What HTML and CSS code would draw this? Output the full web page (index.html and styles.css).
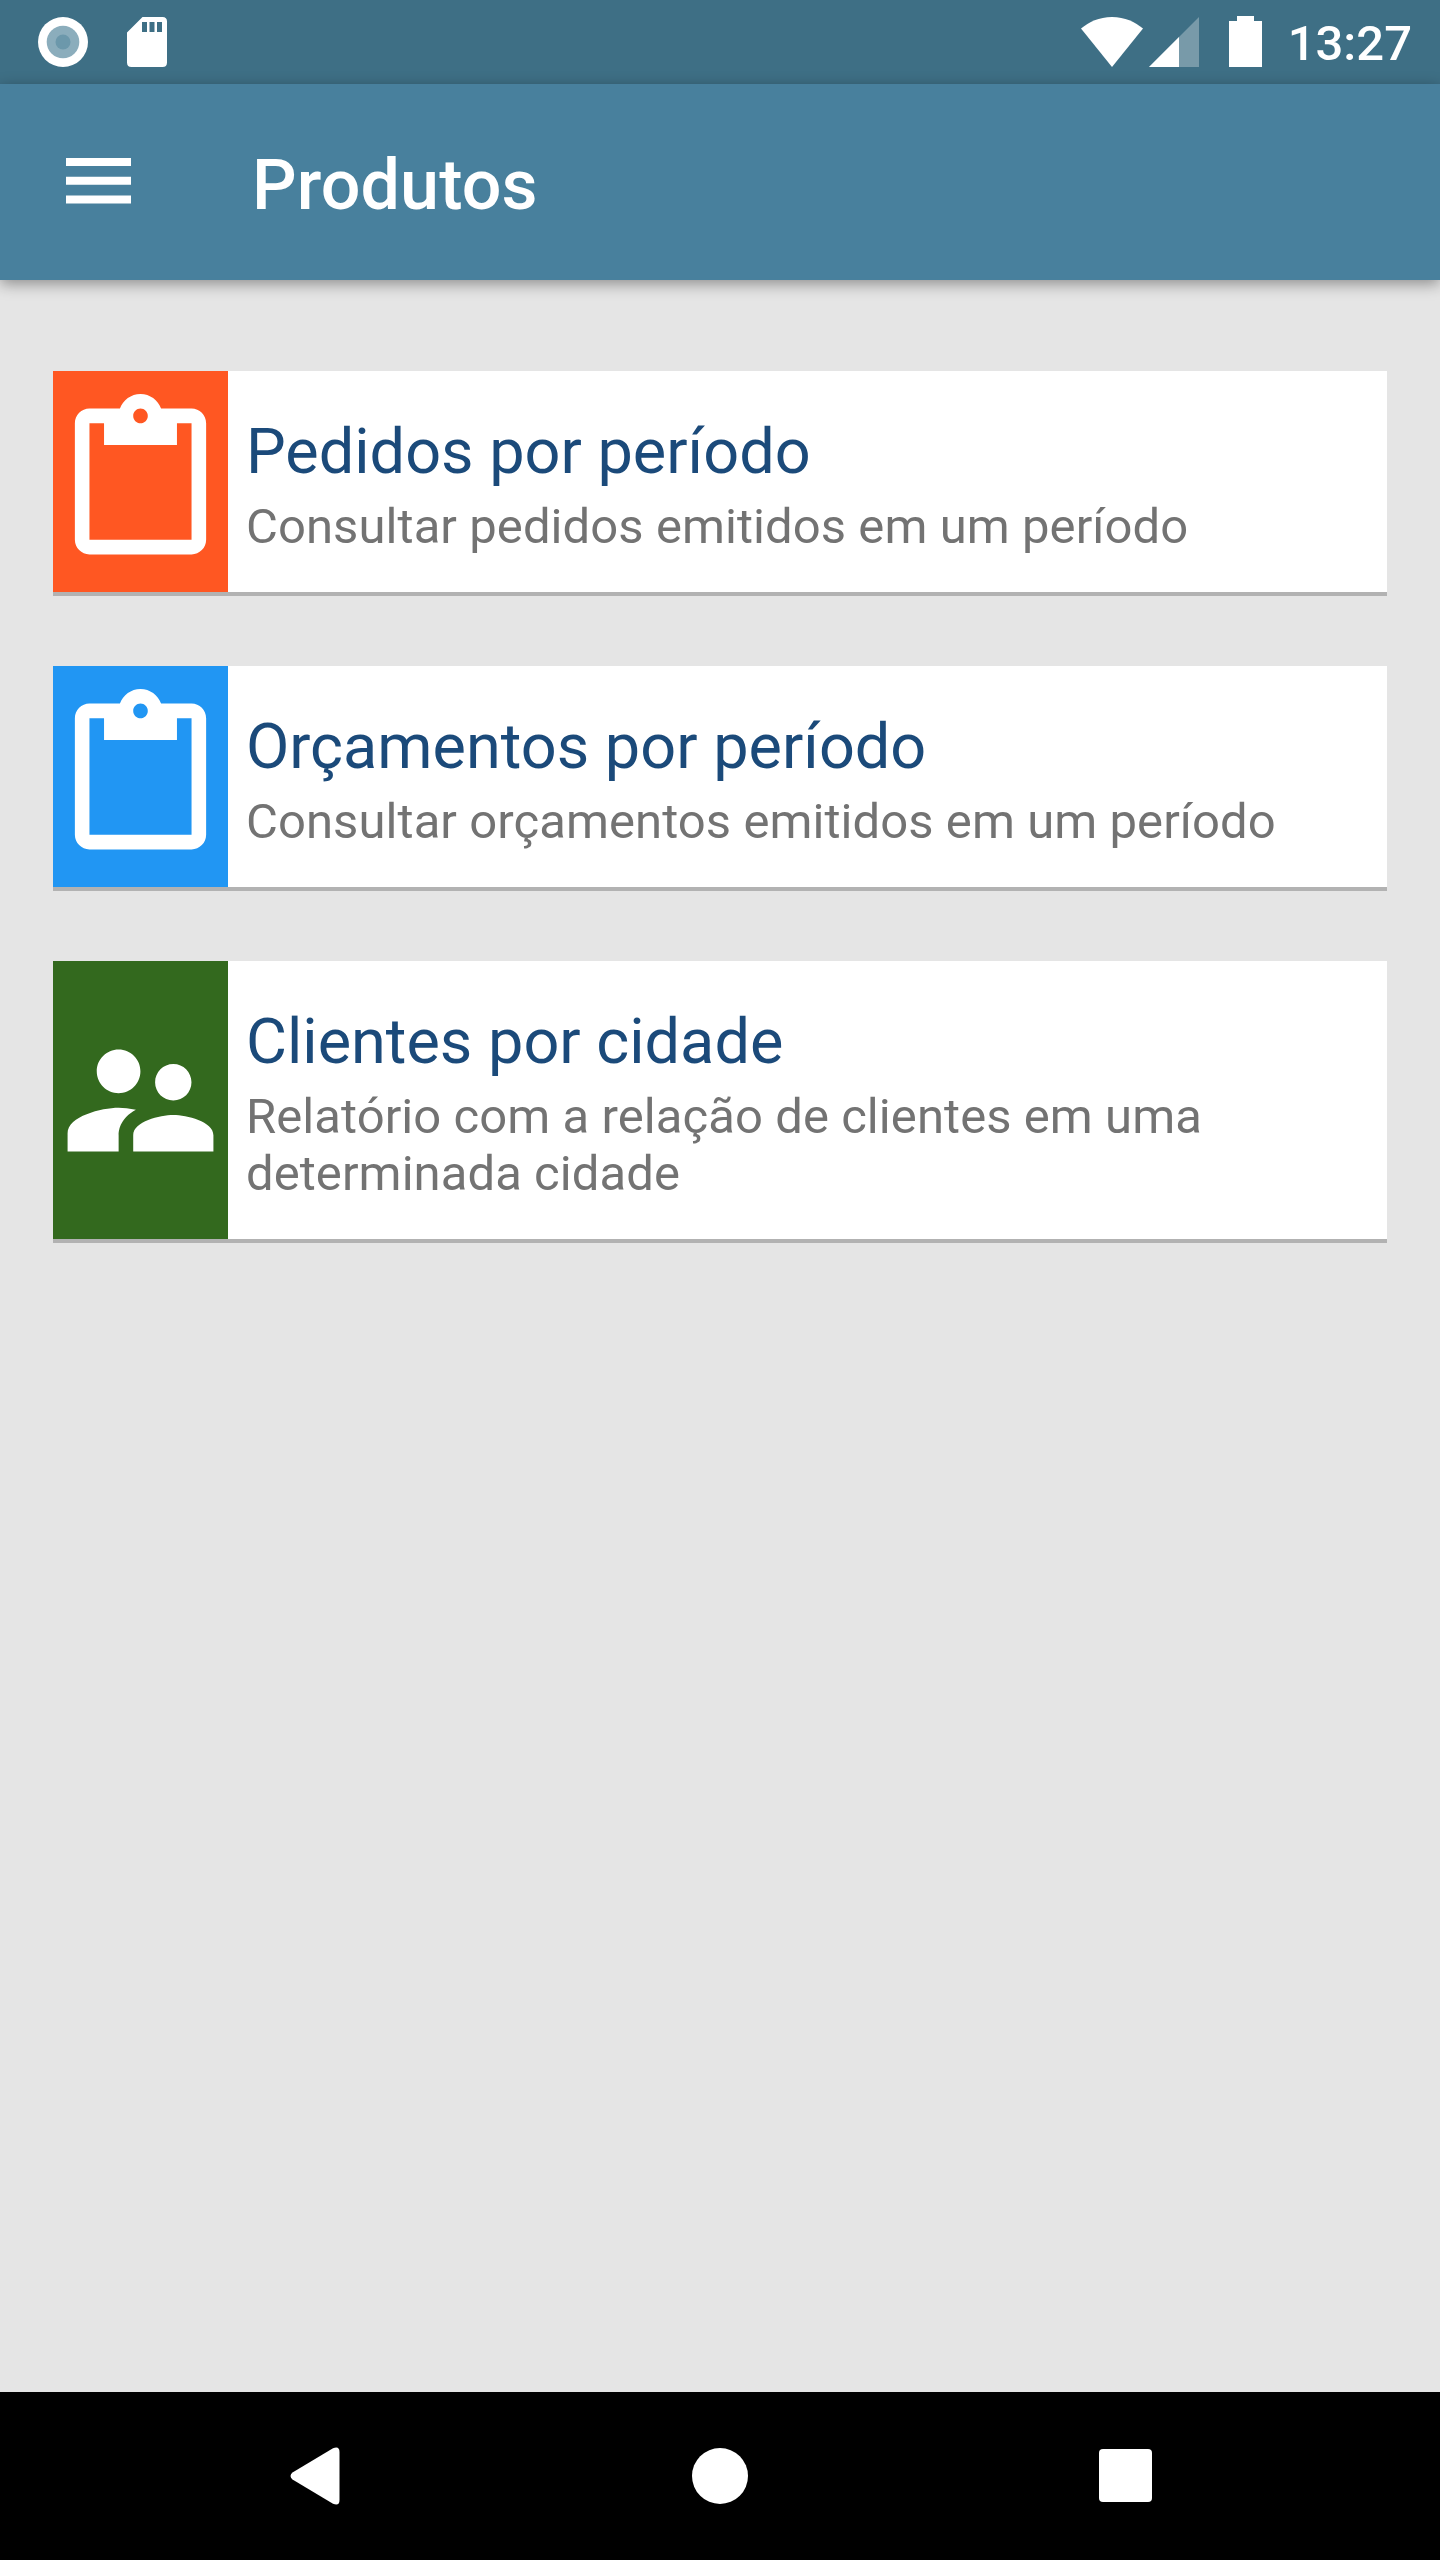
FILE: index.html
```html
<!DOCTYPE html>
<html lang="pt-BR">
<head>
    <meta charset="UTF-8">
    <title>Produtos</title>
    <link rel="stylesheet" href="styles.css">
</head>
<body>
    <div class="statusbar">
        <svg class="record" width="50" height="50" viewBox="0 0 50 50">
            <circle cx="25" cy="25" r="25" fill="#fff"/>
            <circle cx="25" cy="25" r="16.3" fill="#8badbc"/>
            <circle cx="25" cy="25" r="7.5" fill="#6c98ab"/>
        </svg>
        <svg class="sdcard" width="40" height="50" viewBox="0 0 40 50">
            <path fill="#fff" fill-rule="evenodd" d="M15.500 0H35.500Q40 0 40 4.500V45.500Q40 50 35.500 50H4.500Q0 50 0 45.500V15.500ZM15 5V15H20V5ZM22.500 5V15H27.500V5ZM30 5V15H35V5Z"/>
        </svg>
        <div class="system">
            <svg class="wifi" width="62" height="50" viewBox="0 0 62 50">
                <path fill="#fff" d="M31 50L0 11.500C8 5 18 0 31 0s23 5 31 11.500z"/>
            </svg>
            <svg class="signal" width="50" height="50" viewBox="0 0 50 50">
                <path fill="#fff" fill-opacity=".3" d="M0 50L50 0V50z"/>
                <path fill="#fff" d="M0 50L30 20V50z"/>
            </svg>
            <svg class="battery" width="33" height="51" viewBox="0 0 33 51">
                <path fill="#fff" d="M8 0h17v5h8v46H0V5h8z"/>
            </svg>
            <span class="clock">13:27</span>
        </div>
    </div>

    <div class="appbar">
        <svg class="menu" width="65" height="46" viewBox="0 0 65 46">
            <path fill="#fff" d="M0 0h65v8H0zM0 18.800h65v8H0zM0 37.600h65v8H0z"/>
        </svg>
        <h1>Produtos</h1>
    </div>

    <div class="cards">
        <div class="card">
            <div class="icon orders">
                <svg viewBox="0 0 24 24"><path d="M19 2h-4.180C14.400.840 13.300 0 12 0c-1.300 0-2.400.840-2.820 2H5c-1.100 0-2 .9-2 2v16c0 1.100.9 2 2 2h14c1.100 0 2-.9 2-2V4c0-1.100-.9-2-2-2zm-7 0c.55 0 1 .45 1 1s-.45 1-1 1-1-.45-1-1 .45-1 1-1zm7 18H5V4h2v3h10V4h2v16z"/></svg>
            </div>
            <div class="text">
                <h2>Pedidos por período</h2>
                <p>Consultar pedidos emitidos em um período</p>
            </div>
        </div>

        <div class="card">
            <div class="icon quotes">
                <svg viewBox="0 0 24 24"><path d="M19 2h-4.180C14.400.840 13.300 0 12 0c-1.300 0-2.400.840-2.820 2H5c-1.100 0-2 .9-2 2v16c0 1.100.9 2 2 2h14c1.100 0 2-.9 2-2V4c0-1.100-.9-2-2-2zm-7 0c.55 0 1 .45 1 1s-.45 1-1 1-1-.45-1-1 .45-1 1-1zm7 18H5V4h2v3h10V4h2v16z"/></svg>
            </div>
            <div class="text">
                <h2>Orçamentos por período</h2>
                <p>Consultar orçamentos emitidos em um período</p>
            </div>
        </div>

        <div class="card">
            <div class="icon clients">
                <svg viewBox="0 0 24 24"><path d="M16.500 12c1.380 0 2.490-1.120 2.490-2.500S17.880 7 16.500 7C15.120 7 14 8.120 14 9.500s1.120 2.500 2.500 2.500zM9 11c1.660 0 2.990-1.340 2.990-3S10.660 5 9 5C7.340 5 6 6.340 6 8s1.340 3 3 3zm7.500 3c-1.830 0-5.500.920-5.500 2.750V19h11v-2.250c0-1.830-3.670-2.750-5.500-2.750zM9 13c-2.330 0-7 1.170-7 3.500V19h7v-2.250c0-.85.330-2.340 2.370-3.470C10.500 13.100 9.660 13 9 13z"/></svg>
            </div>
            <div class="text">
                <h2>Clientes por cidade</h2>
                <p>Relatório com a relação de clientes em uma determinada cidade</p>
            </div>
        </div>
    </div>

    <div class="navbar">
        <svg class="back" width="50" height="58" viewBox="0 0 50 58">
            <path fill="#fff" d="M2.500 25.500L43 1.200Q49.500-1.500 49.500 5V53Q49.500 59.500 43 56.800L2.500 32.500Q-1.500 29 2.500 25.500z"/>
        </svg>
        <div class="home"></div>
        <div class="recent"></div>
    </div>
</body>
</html>
```
FILE: styles.css
```css
* { box-sizing: border-box; }
body {
    margin: 0;
    height: 2560px;
    display: flex;
    flex-direction: column;
    background: #e5e5e5;
    font-family: Roboto, sans-serif;
}
svg { display: block; flex: none; }
h1, h2, p { margin: 0; }
.statusbar {
    height: 84px;
    padding: 0 28px 0 38px;
    display: flex;
    align-items: center;
    background: #3e6f85;
    color: white;
}
.sdcard { margin-left: 39px; }
.system {
    display: flex;
    align-items: center;
    margin-left: auto;
}
.signal { margin-left: 6px; }
.battery { margin: 0 0 1px 30px; }
.clock {
    margin-left: 26px;
    font-size: 49px;
    font-weight: 500;
    line-height: 58px;
    padding-top: 4px;
}
.appbar {
    height: 196px;
    padding-left: 65.5px;
    display: flex;
    align-items: center;
    background: #48809d;
    color: white;
    box-shadow: 0 4px 14px rgba(0,0,0,0.38);
}
.menu { margin-bottom: 3px; }
.appbar h1 {
    margin-left: 121.5px;
    padding-top: 5px;
    font-size: 70px;
    font-weight: 500;
    line-height: 82px;
    letter-spacing: 0.1px;
}
.cards {
    flex: 1;
    padding: 91px 53px 0;
    display: flex;
    flex-direction: column;
    gap: 70px;
}
.card {
    display: flex;
    background: white;
    border-bottom: 4px solid #b2b2b2;
}
.icon {
    width: 175px;
    flex: none;
    display: flex;
    align-items: center;
}
.icon svg {
    width: 175px;
    height: 175px;
    fill: white;
}
.orders { background: #ff5722; }
.quotes { background: #2196f3; }
.clients { background: #33691e; }
.text {
    flex: 1;
    padding: 44px 17px 37px 18px;
}
.text h2 {
    color: #1b4a7a;
    font-size: 63px;
    font-weight: 400;
    line-height: 74px;
}
.text p {
    margin-top: 9px;
    color: #737373;
    font-size: 49px;
    line-height: 57px;
    letter-spacing: 0.07px;
}
.navbar {
    height: 168px;
    padding: 0 288px 1px 290px;
    display: flex;
    align-items: center;
    justify-content: space-between;
    background: black;
}
.home {
    width: 56px;
    height: 56px;
    border-radius: 50%;
    background: white;
}
.recent {
    width: 53px;
    height: 53px;
    border-radius: 4px;
    background: white;
}
```
